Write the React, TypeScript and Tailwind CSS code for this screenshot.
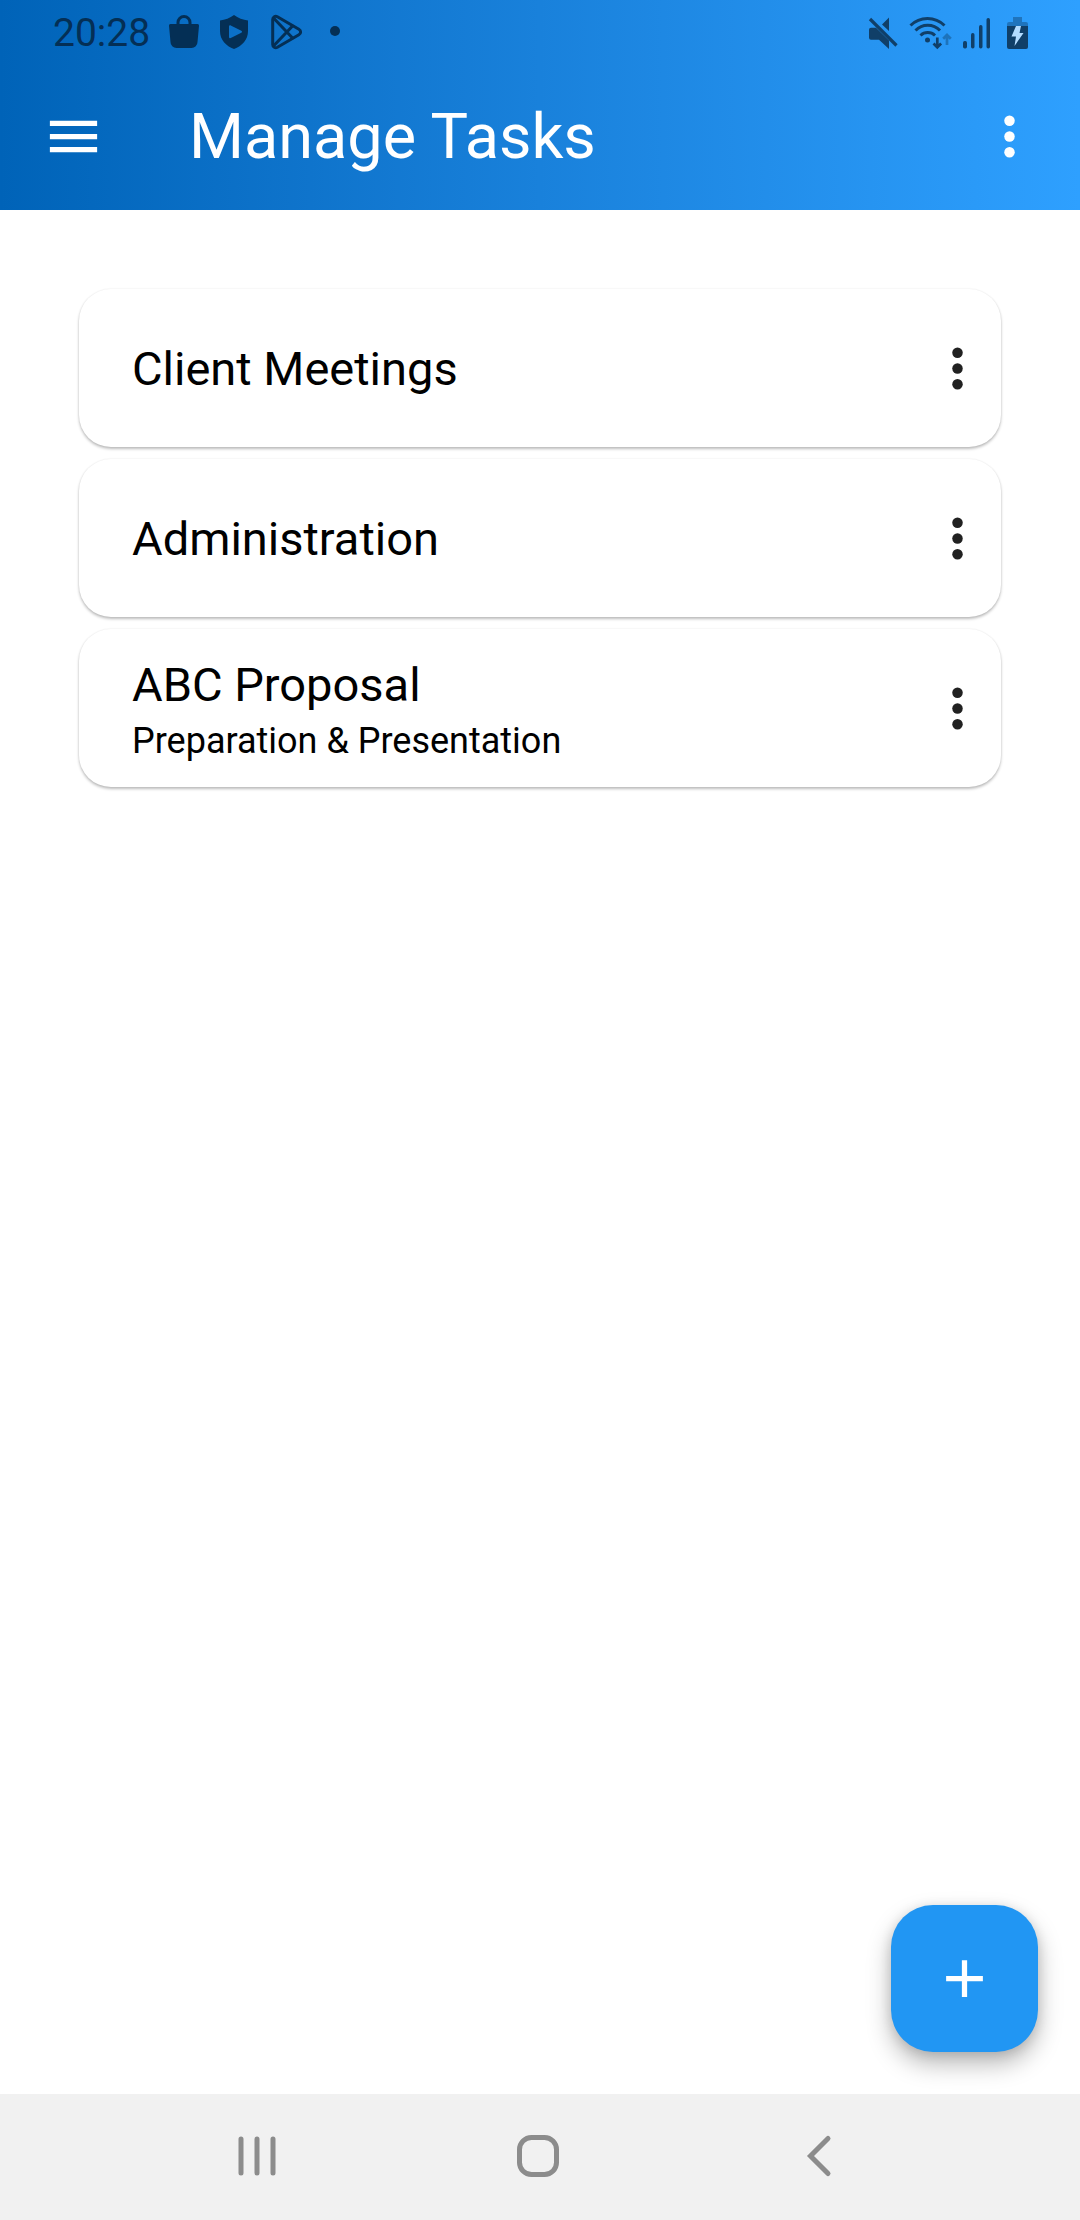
import React from "react";

type Task = { title: string; note?: string };

const tasks: Task[] = [
  { title: "Client Meetings" },
  { title: "Administration" },
  { title: "ABC Proposal", note: "Preparation & Presentation" },
];

function MoreIcon() {
  return (
    <svg viewBox="0 0 24 24" className="size-[63px]" fill="currentColor" aria-hidden="true">
      <circle cx="12" cy="6" r="2" />
      <circle cx="12" cy="12" r="2" />
      <circle cx="12" cy="18" r="2" />
    </svg>
  );
}

function NotificationIcons() {
  return (
    <svg viewBox="0 0 180 40" className="h-[40px] w-[180px]" aria-hidden="true">
      <path d="M12 12V9.500a6 6 0 0 1 12 0V12" fill="none" stroke="currentColor" strokeWidth="3" />
      <path d="M4.500 11h27a1.500 1.500 0 0 1 1.500 1.700L31.500 29a6 6 0 0 1-6 6h-15a6 6 0 0 1-6-6L3 12.700A1.500 1.500 0 0 1 4.500 11Z" fill="currentColor" />
      <path
        d="M68 2c4 3 9 5 14 5.500V18c0 9-6 15-14 18-8-3-14-9-14-18V7.500C59 7 64 5 68 2ZM63 13.500v10.500c0 1 1 1.500 1.800 1.100l10.500-5.400c1-.5 1-1.500 0-2l-10.500-5.300c-.8-.4-1.800.1-1.800 1.100Z"
        fill="currentColor"
        fillRule="evenodd"
      />
      <g fill="none" stroke="currentColor" strokeWidth="3" strokeLinejoin="round">
        <path d="M106.700 6.500v25c0 2.500 2.500 3.900 4.700 2.700l21.500-12.400c2.300-1.300 2.300-4.300 0-5.600L111.400 3.800c-2.200-1.200-4.700.2-4.700 2.700Z" />
        <path d="M107.500 5 127.500 26M107.500 33 127.500 12" />
      </g>
      <circle cx="169" cy="18" r="5" fill="currentColor" />
    </svg>
  );
}

function SystemIcons() {
  return (
    <svg viewBox="0 0 162 38" className="h-[38px] w-[162px] text-[#103f68]" aria-hidden="true">
      <g fill="currentColor">
        <path d="M15 10.500 22 3.500V17ZM4 13.700h5L22 26.500V35L12 25.700H4a2 2 0 0 1-2-2v-8a2 2 0 0 1 2-2Z" />
        <circle cx="60.500" cy="26" r="2.500" />
        <rect x="96" y="27" width="4" height="7.500" rx="1.700" />
        <rect x="104" y="19" width="3.500" height="15.500" rx="1.700" />
        <rect x="112" y="11" width="3.500" height="23.500" rx="1.700" />
        <rect x="119.500" y="4" width="3.500" height="30.500" rx="1.700" />
        <path d="M140 12h21v21a2 2 0 0 1-2 2h-17a2 2 0 0 1-2-2Z" />
      </g>
      <g fill="none" stroke="currentColor" strokeWidth="3">
        <path d="M3 5 29.500 31.500" strokeWidth="3.200" />
        <path d="M43.500 11.500a24 24 0 0 1 34 0M48.500 16.500a17 17 0 0 1 24.500 0M53.500 21.500a10.500 10.500 0 0 1 14.500 0" />
        <path d="M70.300 23.500V33M66.500 29.500l3.800 3.800 3.800-3.800" strokeWidth="2.700" />
      </g>
      <path d="M80 31V21.500M76.200 24.800 80 21l3.800 3.800" fill="none" stroke="#1d73bb" strokeWidth="2.700" />
      <path d="M146 3h9v5h4a2 2 0 0 1 2 2v2h-21v-2a2 2 0 0 1 2-2h4Z" fill="#1f74bd" />
      <path d="M149 12h5l-1.500 7h4L147.500 32l1.500-9.500h-4.500Z" fill="#b3dcff" />
    </svg>
  );
}

function StatusBar() {
  return (
    <div className="flex h-[63px] items-center justify-between pt-[3px] pr-[51px] pl-[53px] text-[#042f55]">
      <div className="flex items-center gap-4">
        <span className="text-[39px] leading-[44px]">20:28</span>
        <NotificationIcons />
      </div>
      <SystemIcons />
    </div>
  );
}

function TaskCard({ title, note }: Task) {
  return (
    <li className="flex h-[158px] items-center justify-between rounded-[32px] bg-white pr-3 pl-[53px] shadow-[0_2px_3px_rgba(0,0,0,0.26),0_0_2px_rgba(0,0,0,0.08)]">
      <div className="flex flex-col gap-1 pt-0.5">
        <h2 className="text-[47px] leading-[60px]">{title}</h2>
        {note && <p className="text-[36px] leading-[44px]">{note}</p>}
      </div>
      <button type="button" aria-label={`Options for ${title}`} className="text-[#212121]">
        <MoreIcon />
      </button>
    </li>
  );
}

export default function App() {
  return (
    <div className="flex min-h-screen flex-col bg-white font-[Roboto,sans-serif] text-black">
      <header className="bg-linear-to-r from-[#0063b8] to-[#2ea0ff]">
        <StatusBar />
        <div className="flex h-[147px] items-center pr-[39px] pl-[42px] text-white">
          <button type="button" aria-label="Open menu">
            <svg viewBox="0 0 24 24" className="size-[63px]" fill="currentColor" aria-hidden="true">
              <path d="M3 18h18v-2H3v2Zm0-5h18v-2H3v2Zm0-7v2h18V6H3Z" />
            </svg>
          </button>
          <h1 className="ml-[84px] flex-1 text-[63px] leading-[76px]">Manage Tasks</h1>
          <button type="button" aria-label="More options">
            <MoreIcon />
          </button>
        </div>
      </header>

      <main className="relative flex-1 px-[79px] pt-[79px]">
        <ul className="flex flex-col gap-3">
          {tasks.map((task) => (
            <TaskCard key={task.title} {...task} />
          ))}
        </ul>
        <button
          type="button"
          aria-label="Add task"
          className="absolute right-[42px] bottom-[42px] flex size-[147px] items-center justify-center rounded-[42px] bg-[#2196f3] text-white shadow-[0_12px_24px_rgba(0,0,0,0.28),0_2px_12px_rgba(0,0,0,0.12)]"
        >
          <svg viewBox="0 0 24 24" className="size-[63px]" fill="currentColor" aria-hidden="true">
            <path d="M19 13h-6v6h-2v-6H5v-2h6V5h2v6h6v2Z" />
          </svg>
        </button>
      </main>

      <nav aria-label="System navigation" className="flex h-[126px] items-center bg-[#f1f1f1] pr-[120px] pb-0.5 pl-[116px] text-[#8c8c8c]">
        <button type="button" aria-label="Recent apps" className="flex flex-1 justify-center">
          <svg viewBox="0 0 44 44" className="size-[44px]" aria-hidden="true">
            <path d="M6 5v34M22 5v34M38 5v34" stroke="currentColor" strokeWidth="5" strokeLinecap="round" />
          </svg>
        </button>
        <button type="button" aria-label="Home" className="flex flex-1 justify-center">
          <svg viewBox="0 0 44 44" className="size-[44px]" aria-hidden="true">
            <rect x="3.500" y="3.500" width="37" height="37" rx="12" fill="none" stroke="currentColor" strokeWidth="5" />
          </svg>
        </button>
        <button type="button" aria-label="Back" className="flex flex-1 justify-center">
          <svg viewBox="0 0 44 44" className="size-[44px]" aria-hidden="true">
            <path d="M31 4.500 13.500 22 31 39.500" fill="none" stroke="currentColor" strokeWidth="5" strokeLinecap="round" />
          </svg>
        </button>
      </nav>
    </div>
  );
}
